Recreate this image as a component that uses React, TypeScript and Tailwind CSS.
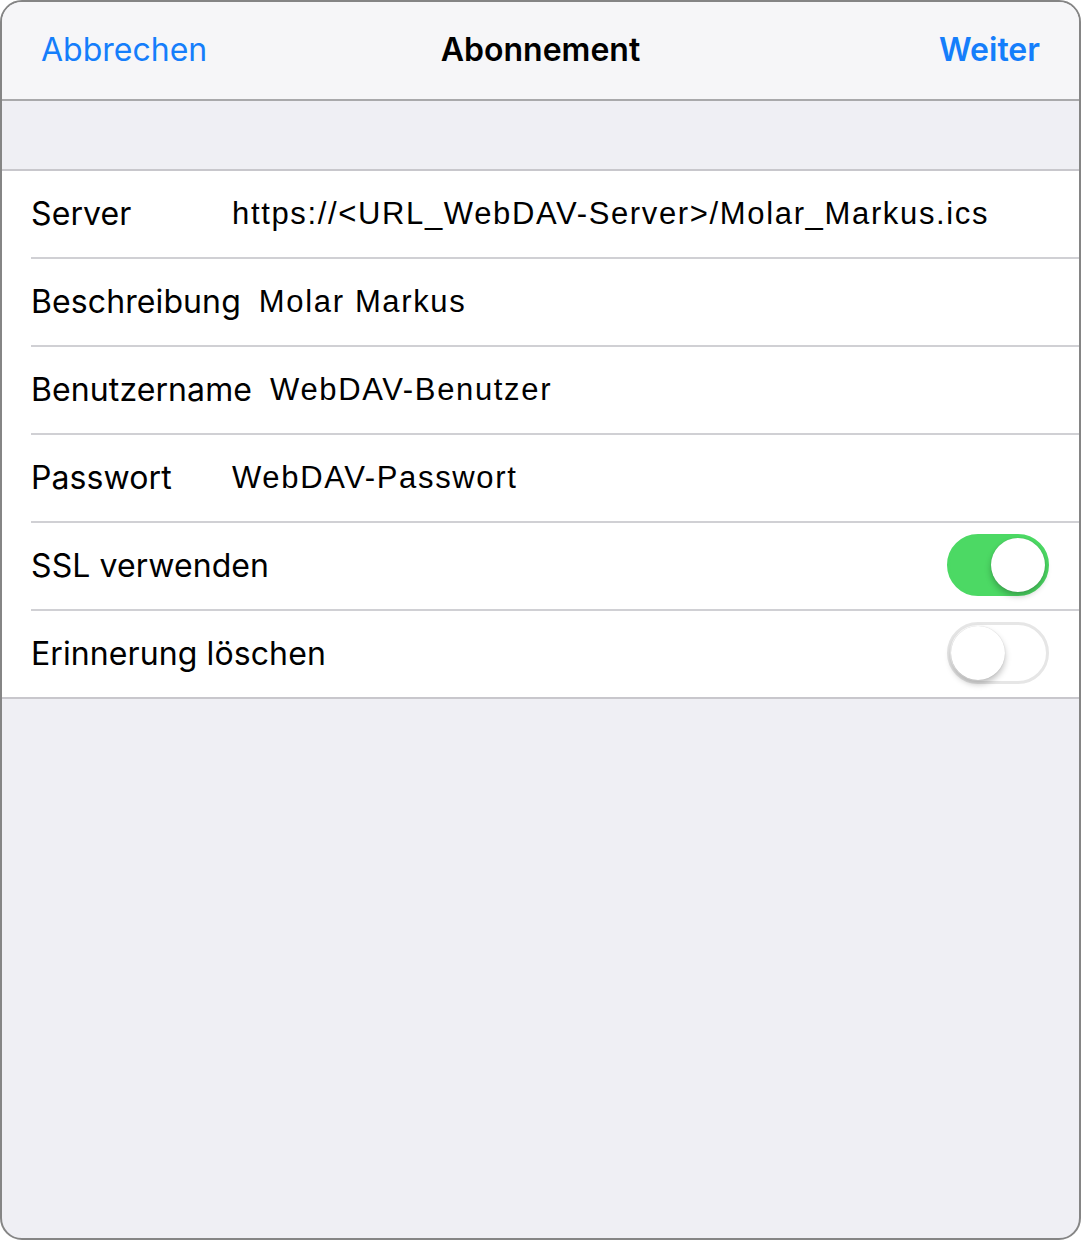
import React, { useState } from 'react';

const font = { fontFamily: 'Inter, "Noto Sans", sans-serif' };

interface RowProps {
  label: string;
  value?: string;
  last?: boolean;
  children?: React.ReactNode;
}

const Row: React.FC<RowProps> = ({ label, value, last, children }) => (
  <div className="pl-[29px]">
    <div
      className={`flex items-center pr-[30px] ${last ? 'h-[86px]' : 'h-[88px] border-b-2 border-[#d0d0d4]'}`}
    >
      <span className="min-w-[201px] pr-[18px] text-[32px] tracking-[0.1px] text-black">{label}</span>
      {value && (
        <span className="text-[31px] tracking-[1.65px] text-black" style={{ fontFamily: '"Liberation Sans", Arial, sans-serif' }}>
          {value}
        </span>
      )}
      <div className="ml-auto">{children}</div>
    </div>
  </div>
);

const Toggle: React.FC<{ on: boolean; onChange: () => void }> = ({ on, onChange }) => (
  <button
    type="button"
    onClick={onChange}
    className={`relative h-[62px] w-[102px] rounded-full border-[3px] ${
      on ? 'border-[#4cd964] bg-[#4cd964]' : 'border-[#e6e6e6] bg-white'
    }`}
  >
    <span
      className={`absolute top-[1px] h-[54px] w-[54px] rounded-full bg-white shadow-[0_4px_6px_rgba(0,0,0,0.25),0_0_1px_rgba(0,0,0,0.2)] ${
        on ? 'left-[41px]' : 'left-[1px]'
      }`}
    />
  </button>
);

export default function App() {
  const [ssl, setSsl] = useState(true);
  const [del, setDel] = useState(false);

  return (
    <div className="h-[1240px] w-[1081px] bg-white" style={font}>
      <div className="flex h-full w-full flex-col overflow-hidden rounded-[22px] border-2 border-[#858585] bg-[#efeff4]">
        {/* Nav bar */}
        <div className="flex h-[99px] items-center justify-between border-b-2 border-[#a9a9ab] bg-[#f6f6f8] px-[39px] pb-[2px]">
          <span className="w-[200px] text-[32px] text-[#157efb]">Abbrechen</span>
          <span className="text-[32px] font-semibold text-black">Abonnement</span>
          <span className="w-[200px] text-right text-[32px] font-semibold text-[#157efb]">Weiter</span>
        </div>

        <div className="h-[68px]" />

        <div className="border-y-2 border-[#c8c7cc] bg-white">
          <Row label="Server" value="https://<URL_WebDAV-Server>/Molar_Markus.ics" />
          <Row label="Beschreibung" value="Molar Markus" />
          <Row label="Benutzername" value="WebDAV-Benutzer" />
          <Row label="Passwort" value="WebDAV-Passwort" />
          <Row label="SSL verwenden">
            <Toggle on={ssl} onChange={() => setSsl(!ssl)} />
          </Row>
          <Row label="Erinnerung löschen" last>
            <Toggle on={del} onChange={() => setDel(!del)} />
          </Row>
        </div>
      </div>
    </div>
  );
}
